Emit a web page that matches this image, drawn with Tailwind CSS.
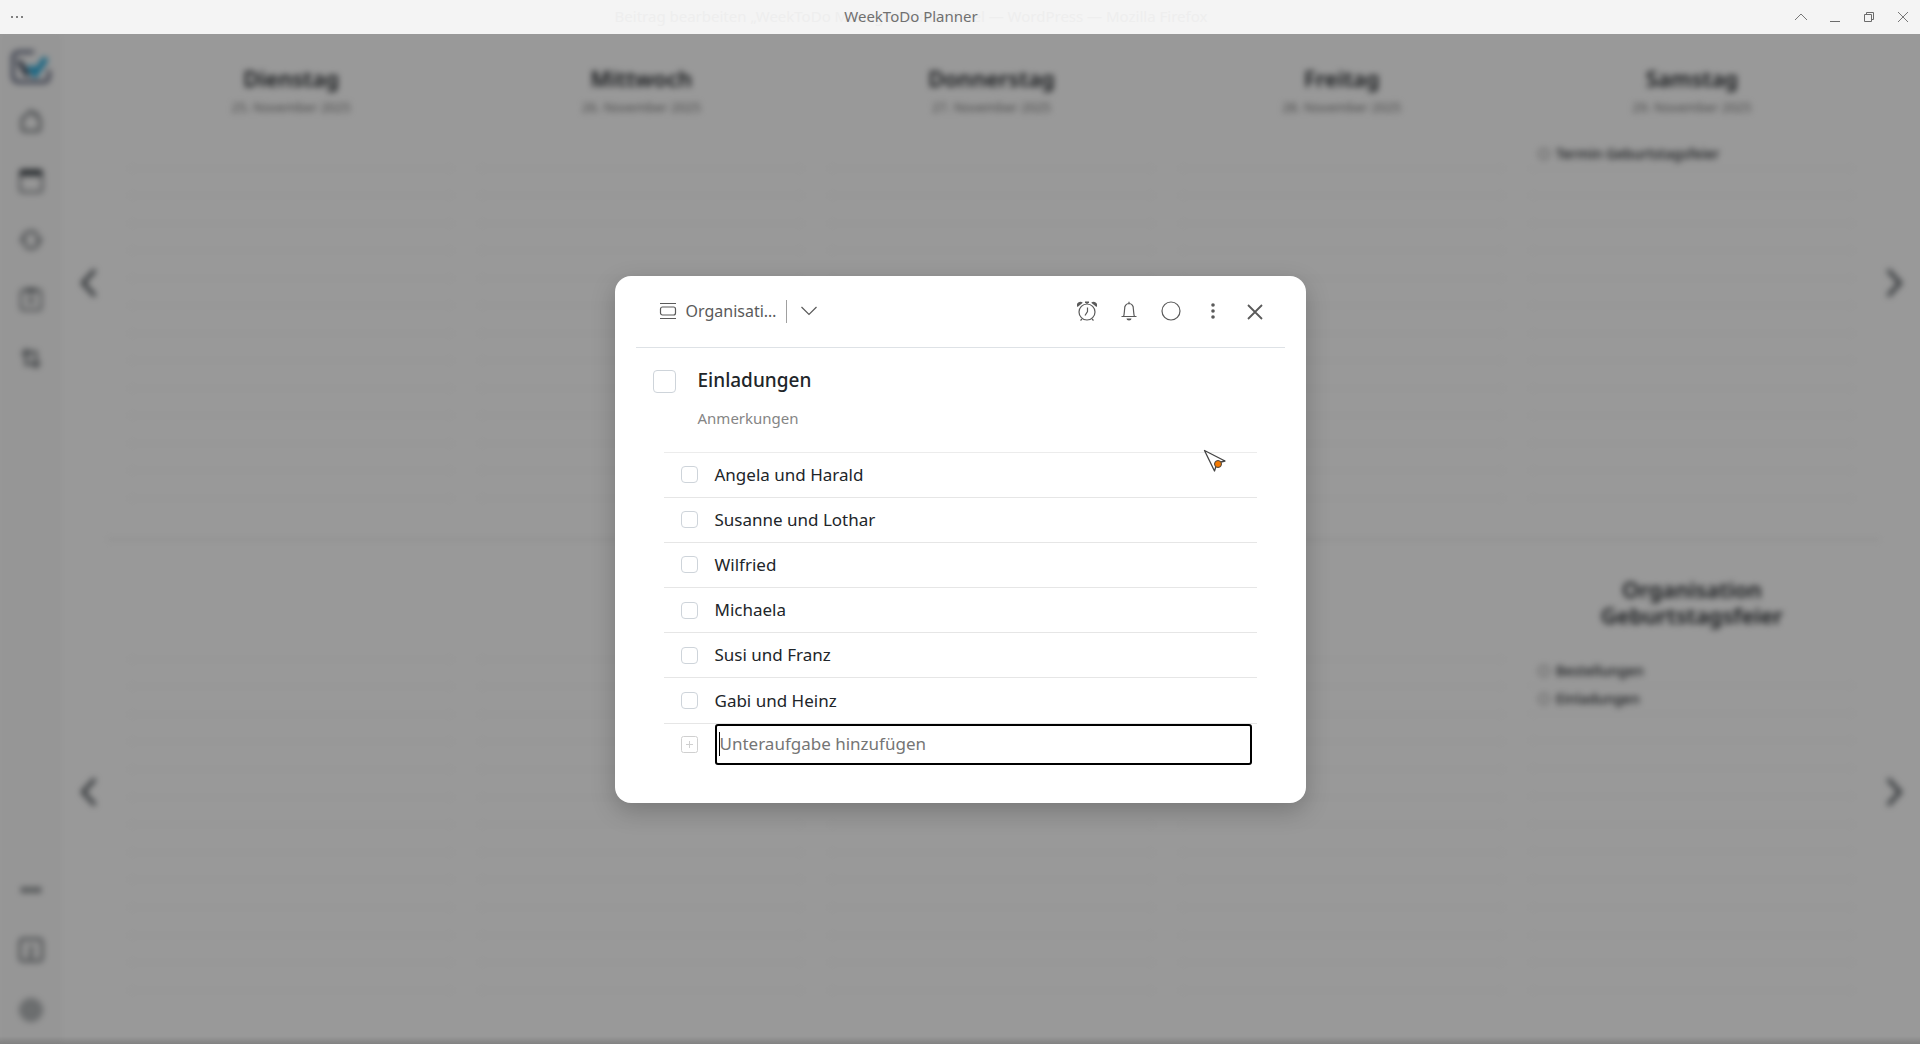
<!DOCTYPE html>
<html lang="de">
<head>
<meta charset="utf-8">
<title>WeekToDo Planner</title>
<script src="https://cdn.jsdelivr.net/npm/@tailwindcss/browser@4"></script>
</head>
<body class="flex h-screen min-h-[900px] flex-col overflow-hidden bg-white font-['Noto_Sans',sans-serif] text-[#212529]">

<!-- Window title bar -->
<header class="grid h-[34px] shrink-0 grid-cols-[1fr_auto_1fr] items-center bg-[#f4f4f4] text-[15px] text-[#707070]">
  <button aria-label="Menü" class="ml-[11px] flex w-fit gap-[3px]">
    <span class="size-[2px] bg-[#808080]"></span><span class="size-[2px] bg-[#808080]"></span><span class="size-[2px] bg-[#808080]"></span>
  </button>
  <div class="mr-[98px] grid place-items-center pb-px whitespace-nowrap">
    <span class="col-start-1 row-start-1 text-[#eeeeee]">Beitrag bearbeiten „WeekToDo Manager“ Linux Bibel — WordPress — Mozilla Firefox</span>
    <h1 class="col-start-1 row-start-1">WeekToDo Planner</h1>
  </div>
  <div class="mr-[9px] flex justify-end gap-[18px]">
    <button aria-label="Einrollen"><svg class="size-4" viewBox="0 0 16 16" fill="none" stroke="#777"><path d="M2 11l6-6 6 6"/></svg></button>
    <button aria-label="Minimieren"><svg class="size-4" viewBox="0 0 16 16" fill="none" stroke="#6b6b6b"><path d="M3 12.500h10"/></svg></button>
    <button aria-label="Wiederherstellen"><svg class="size-4" viewBox="0 0 16 16" fill="none" stroke="#6b6b6b"><path d="M3.500 5.500h7v7h-7zM5.500 5.500v-2h7v7h-2"/></svg></button>
    <button aria-label="Schließen"><svg class="size-4" viewBox="0 0 16 16" fill="none" stroke="#777"><path d="M3 3l10 10M13 3L3 13"/></svg></button>
  </div>
</header>

<div class="relative min-h-0 flex-1 overflow-hidden">

  <!-- Planner behind the dialog -->
  <div class="flex h-full blur-[3px]">
    <nav class="flex w-[62px] shrink-0 flex-col items-center justify-between bg-[#fafafa] pt-[13px] pb-[18px] text-[#6c7175]">
      <div class="flex flex-col items-center gap-[27px]">
        <a href="#" aria-label="WeekToDo" class="-mb-2"><svg class="size-10" viewBox="0 0 40 40" fill="none" stroke-width="3"><path stroke="#434c68" d="M23 5H8q-6 0-6 6v18q0 6 6 6h24q6 0 6-6v-6"/><path fill="#1d2940" d="M6 14l4-1 9 16h-5z"/><path stroke="#1fa5d8" stroke-width="6" d="M18 19l6 8 11-16"/></svg></a>
        <button aria-label="Heute"><svg class="size-8" viewBox="0 0 32 32" fill="none" stroke="currentColor" stroke-width="2.500"><path d="M7 13l9-8 9 8v9q0 3-3 3H10q-3 0-3-3zM22 6v5"/></svg></button>
        <button aria-label="Kalender"><svg class="size-8" viewBox="0 0 32 32" fill="none" stroke="currentColor" stroke-width="2"><rect x="5" y="5" width="22" height="22" rx="3"/><path fill="#454b50" stroke="#454b50" d="M6 6h20v4H6z"/></svg></button>
        <button aria-label="Wiederkehrend"><svg class="size-8" viewBox="0 0 32 32" fill="none" stroke="currentColor" stroke-width="2.500"><path d="M8 14a8 8 0 0 1 15-2M24 18a8 8 0 0 1-15 2"/><path fill="currentColor" stroke="none" d="M4 18l4-5 5 5zM19 14h9l-4 5z"/></svg></button>
        <button aria-label="Listen"><svg class="size-8" viewBox="0 0 32 32" fill="none" stroke="currentColor" stroke-width="2"><rect x="6" y="7" width="20" height="20" rx="3"/><path d="M12 6h8v3h-8zM16 13v9M13 17h6"/></svg></button>
        <button aria-label="Verschieben"><svg class="size-8" viewBox="0 0 32 32" fill="none" stroke="currentColor" stroke-width="2.500"><path d="M11 24V9m-4 4l4-5 4 5M21 9v15m-4-4l4 5 4-5M14 10h7M11 22h7"/></svg></button>
      </div>
      <div class="flex flex-col items-center gap-7">
        <button aria-label="Mehr"><svg class="size-8" viewBox="0 0 32 32" fill="currentColor"><circle cx="9" cy="16" r="3"/><circle cx="16" cy="16" r="3"/><circle cx="23" cy="16" r="3"/></svg></button>
        <button aria-label="Info"><svg class="size-8" viewBox="0 0 32 32" fill="none" stroke="currentColor" stroke-width="2.500"><rect x="5" y="5" width="22" height="22" rx="3"/><path d="M16 10v2M14 15h3l-2 8h3"/></svg></button>
        <button aria-label="Einstellungen"><svg class="size-8" viewBox="0 0 32 32" fill="none" stroke="#a9adaf"><circle cx="16" cy="16" r="11.500" fill="#b4b7b9" stroke="#a9adaf"/></svg></button>
      </div>
    </nav>
    <main id="planner" class="grid min-w-0 flex-1 grid-rows-2"></main>
  </div>

  <!-- Dimmed backdrop with the task dialog -->
  <div class="absolute inset-0 flex items-center justify-center bg-black/40">
    <section role="dialog" aria-label="Einladungen" class="h-[527px] w-[691px] rounded-2xl bg-white px-[21px] shadow-[0_8px_24px_rgba(0,0,0,0.22)]">
      <div class="flex h-[72px] items-center border-b border-[#dee2e6] pr-5 pl-[23px] text-[#5a5a5a]">
        <svg class="size-[18px]" viewBox="0 0 18 18" fill="none" stroke="currentColor" stroke-width="1.200"><path d="M1 1.500h16M1 16.500h16"/><rect x="1.500" y="5" width="15" height="8" rx="2"/></svg>
        <button class="ml-[9px] w-[91px] truncate text-left text-base leading-5">Organisation Geburtstagsfeier</button>
        <span class="ml-[9px] h-[23px] w-px bg-[#a0a0a0]"></span>
        <button aria-label="Liste wählen" class="ml-3"><svg class="size-5" viewBox="0 0 20 20" fill="none" stroke="currentColor" stroke-width="1.200"><path d="M2.500 6l7.500 7.500L17.500 6"/></svg></button>
        <div class="ml-auto flex items-center gap-[22px]">
          <button aria-label="Uhrzeit"><svg class="size-5" viewBox="0 0 20 20" fill="none" stroke="currentColor" stroke-width="1.200"><circle cx="10" cy="11" r="8"/><path d="M10.500 6.500v4l-2.500 4M10 1v2M5 18l-1.500 1.500M15 18l1.500 1.500"/><path fill="currentColor" stroke="none" d="M8 .500h4V2H8zM.500 6A3.400 3.400 0 0 1 5.800 1.800zM19.500 6A3.400 3.400 0 0 0 14.200 1.800z"/></svg></button>
          <button aria-label="Erinnerung"><svg class="size-5" viewBox="0 0 20 20" fill="none" stroke="currentColor" stroke-width="1.200"><path d="M4.500 15.500c1-2 .700-5 1.200-8A4.400 4.400 0 0 1 10 2.500a4.400 4.400 0 0 1 4.300 5c.500 3 .200 6 1.200 8M2.500 15.500h15M10 .800v1.700"/><path fill="currentColor" stroke="none" d="M7.500 17.500h5a2.500 2 0 0 1-5 0z"/></svg></button>
          <button aria-label="Farbe"><svg class="size-5" viewBox="0 0 20 20" fill="none" stroke="currentColor" stroke-width="1.200"><circle cx="10" cy="10" r="9"/></svg></button>
          <button aria-label="Weitere Optionen"><svg class="size-5" viewBox="0 0 20 20" fill="currentColor"><circle cx="10" cy="4" r="1.800"/><circle cx="10" cy="10" r="1.800"/><circle cx="10" cy="16" r="1.800"/></svg></button>
          <button aria-label="Dialog schließen"><svg class="size-5" viewBox="0 0 20 20" fill="none" stroke="currentColor" stroke-width="1.800"><path d="M3 4l14 14M17 4L3 18"/></svg></button>
        </div>
      </div>

      <div class="flex h-[104px] gap-[22px] pt-[18px] pl-[17px]">
        <input id="done" type="checkbox" class="mt-1 size-[23px] appearance-none rounded border border-[#ced4da]">
        <div>
          <label for="done" class="block text-[19px] leading-7 font-medium">Einladungen</label>
          <p class="mt-3 text-[15px] leading-6 text-[#858585]">Anmerkungen</p>
        </div>
      </div>

      <ul id="subtasks" class="mx-7 grid h-[272px] grid-rows-6 border-t border-[#ececec]"></ul>
      <div class="mx-7 flex items-center gap-[17px] pr-[5px] pl-[17px]">
        <svg class="size-[17px]" viewBox="0 0 17 17" fill="none" stroke="#d0d0d0"><rect x=".5" y=".5" width="16" height="16" rx="2"/><path d="M8.500 5v7M5 8.500h7"/></svg>
        <div class="flex h-[41px] flex-1 items-center rounded-[3px] border-2 border-black bg-white px-[2px]">
          <span class="h-6 w-px bg-black"></span>
          <input type="text" aria-label="Unteraufgabe" placeholder="Unteraufgabe hinzufügen" class="min-w-0 flex-1 text-[17px] placeholder-[#757575] outline-none">
        </div>
      </div>
    </section>
  </div>

  <!-- Mouse pointer -->
  <svg class="absolute top-[415px] left-[1203px] size-6" viewBox="0 0 24 24"><path fill="#fff" stroke="#444" stroke-width="1.300" stroke-linejoin="round" d="M1.500 1.500L22 12l-8 2-2.500 8z"/><circle cx="15" cy="15" r="3.500" fill="#f57900" stroke="#444"/></svg>
  <div class="absolute inset-x-0 bottom-0 h-2 bg-linear-to-t from-black/15 to-transparent"></div>
</div>

<script>
const days = [
  ['Dienstag', '25. November 2025', 13, []],
  ['Mittwoch', '26. November 2025', 13, []],
  ['Donnerstag', '27. November 2025', 13, []],
  ['Freitag', '28. November 2025', 13, []],
  ['Samstag', '29. November 2025', 13, ['Termin Geburtstagsfeier']],
];
const lists = [['', '', 13, []], ['', '', 13, []], ['', '', 13, []], ['', '', 13, []],
  ['Organisation Geburtstagsfeier', '', 12, ['Bestellungen', 'Einladungen']]];

const row = t => `<li class="flex flex-1 basis-0 items-center gap-[6px] border-b border-[#f0f0f0] pb-px pl-2 text-sm font-medium">${
  t ? `<span class="size-3 rounded-full border-2 border-[#aaa]"></span>${t}` : ''}</li>`;

const column = ([title, date, count, tasks]) => `
  <article class="flex flex-col px-[13px]">
    <div class="shrink-0 pb-[30px] text-center">
      <h2 class="mx-auto min-h-[26px] max-w-[200px] text-[22px] leading-[26px] font-semibold">${title}</h2>
      ${date && `<p class="mt-[7px] -mb-[5px] text-[13px] leading-[18px] text-[#777]">${date}</p>`}
    </div>
    <ul class="flex flex-1 flex-col">${Array.from({length: count}, (_, i) => row(tasks[i] || '')).join('')}</ul>
  </article>`;

const arrow = (label, d) => `<button aria-label="${label}" class="flex w-[53px] shrink-0 items-center justify-center text-[#53595e]">
  <svg class="size-9" viewBox="0 0 36 36" fill="none" stroke="currentColor" stroke-width="4"><path d="${d}"/></svg></button>`;

const section = (items, cls, gridCls) => `<section class="flex ${cls}">
  ${arrow('Zurück', 'M23 5L11 18l12 13')}
  <div class="grid flex-1 grid-cols-5 ${gridCls}">${items.map(column).join('')}</div>
  ${arrow('Weiter', 'M12 5l12 13-12 13')}</section>`;

document.getElementById('planner').innerHTML =
  section(days, 'pb-2 pl-px', 'pt-[31px] pb-8') +
  section(lists, 'relative pl-px before:absolute before:right-10 before:left-[45px] before:top-0 before:h-px before:bg-[#dcdcdc]', 'pt-[37px] pb-[53px]');

document.getElementById('subtasks').innerHTML =
  ['Angela und Harald', 'Susanne und Lothar', 'Wilfried', 'Michaela', 'Susi und Franz', 'Gabi und Heinz']
  .map((t, i) => `<li class="flex items-center gap-[17px] border-b border-[#e6e6e6] pl-[17px]">
    <input id="sub${i}" type="checkbox" class="size-[17px] appearance-none rounded border border-[#ced4da]">
    <label for="sub${i}" class="text-[17px]">${t}</label></li>`).join('');
</script>
</body>
</html>
